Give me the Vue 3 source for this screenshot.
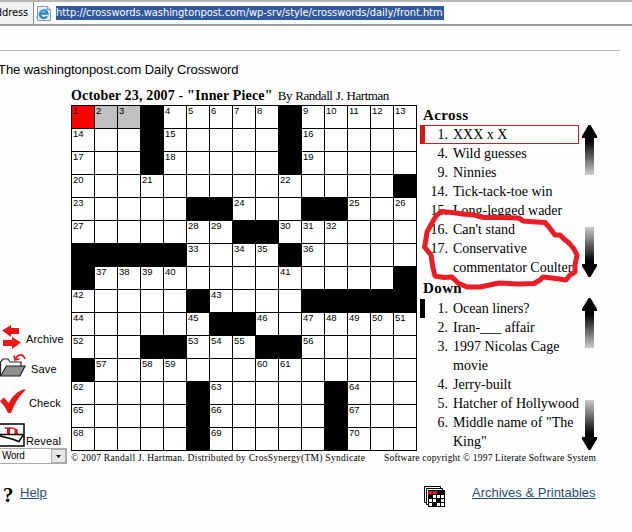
<script setup>
const rows = [
  '...#.....#.....',
  '...#.....#.....',
  '...#.....#.....',
  '..............#',
  '.....##...##...',
  '.......##......',
  '#####....#.....',
  '#.............#',
  '.....#....#####',
  '......##.......',
  '...##...##.....',
  '#..............',
  '.....#.....#...',
  '.....#.....#...',
  '.....#.....#...'
]
const blocked = (r, c) => !rows[r] || rows[r][c] !== '.'
let count = 0
const cells = rows.flatMap((row, r) =>
  [...row].map((ch, c) => {
    const starts = ch === '.' && (blocked(r, c - 1) || blocked(r - 1, c))
    return {
      id: `${r}-${c}`,
      block: ch === '#',
      current: r === 0 && c === 0,
      word: r === 0 && (c === 1 || c === 2),
      number: starts ? ++count : ''
    }
  })
)
const panels = [
  {
    name: 'Across',
    clues: [
      [1, 'XXX x X'], [4, 'Wild guesses'], [9, 'Ninnies'], [14, 'Tick-tack-toe win'],
      [15, 'Long-legged wader'], [16, "Can't stand"], [17, 'Conservative commentator Coulter']
    ]
  },
  {
    name: 'Down',
    clues: [
      [1, 'Ocean liners?'], [2, 'Iran-___ affair'], [3, '1997 Nicolas Cage movie'],
      [4, 'Jerry-built'], [5, 'Hatcher of Hollywood'], [6, 'Middle name of "The King"']
    ]
  }
]
</script>

<template>
  <div class="page">
    <header class="address">
      <span class="label">Address</span>
      <div class="field">
        <svg class="ie" width="16" height="17" viewBox="0 0 16 17">
          <path d="M1.5 1.5h10l3 3v11h-13z" fill="#e4edf7" stroke="#8c9bb0" />
          <path d="M11.5 1.5v3h3" fill="#cfdcec" stroke="#8c9bb0" />
          <path d="M11 11.2a3.8 3.8 0 1 1 .5-2.6H4.5" fill="none" stroke="#2583c4" stroke-width="2.2" />
          <path d="M1 13C-.5 10 7 4 12.500 4.500" fill="none" stroke="#55a9dc" />
        </svg>
        <span class="url">http://crosswords.washingtonpost.com/wp-srv/style/crosswords/daily/front.htm</span>
      </div>
    </header>
    <div class="rule"></div>
    <h1 class="title">The washingtonpost.com Daily Crossword</h1>
    <main class="main">
      <nav class="tools">
        <div class="tool archive">
          <svg width="25" height="24" viewBox="0 0 25 24" fill="#ed1515">
            <path d="M2 5.500 11 0v3h8v6h-8v3zM21 17.500 12 12v3H3v6h9v3z" />
          </svg>
          <span>Archive</span>
        </div>
        <div class="tool save">
          <svg width="26" height="24" viewBox="0 0 26 24">
            <path d="M.5 23V9l2.500-3h5l2 3h11v5" fill="#fff" stroke="#222" stroke-width="1.200" />
            <path d="M.5 23 6.500 13H25l-5 10z" fill="#8e8e8e" stroke="#222" stroke-width="1.200" />
            <path d="M25 6C23 0 18 1 15.500 6M14 2.500l1 4.500 4.500-1" fill="none" stroke="#e02020" stroke-width="1.700" />
          </svg>
          <span>Save</span>
        </div>
        <div class="tool check">
          <svg width="26" height="25" viewBox="0 0 26 25">
            <path d="M0 12 4 8.500 8.500 14Q14 4 23 0.500h3Q16 10 11 24H8Q5 17 0 12z" fill="#ed1515" />
          </svg>
          <span>Check</span>
        </div>
        <div class="tool reveal">
          <svg width="25" height="24" viewBox="0 0 25 24">
            <path d="M-1 1H24V23H-1z" fill="#fff" stroke="#000" stroke-width="1.500" />
            <path d="M5 5h6q6 0 6 6" fill="none" stroke="#d81818" stroke-width="1.500" />
            <path d="M8.500 5v6M16 6v5" fill="none" stroke="#d81818" stroke-width="3" />
            <path d="M0 11.500H24M0 13l12 3 7 2.500 4-6" fill="none" stroke="#000" stroke-width="1.600" />
          </svg>
          <span>Reveal</span>
        </div>
        <div class="select">
          <span>Word</span>
          <i><svg width="5" height="3" viewBox="0 0 5 3"><path d="M0 0h5L2.500 3z" /></svg></i>
        </div>
      </nav>
      <section class="puzzle">
        <h2 class="heading"><b>October 23, 2007 - "Inner Piece"</b> <span>By Randall J. Hartman</span></h2>
        <div class="board">
          <div
            v-for="cell in cells"
            :key="cell.id"
            class="cell"
            :class="{ block: cell.block, current: cell.current, word: cell.word }"
          >{{ cell.number }}</div>
        </div>
      </section>
      <section class="clues">
        <div v-for="(panel, p) in panels" :key="panel.name" class="panel" :class="panel.name.toLowerCase()">
          <h3>{{ panel.name }}</h3>
          <div class="body">
            <ol>
              <li v-for="(clue, i) in panel.clues" :key="clue[0]" :class="{ first: i === 0 }">
                <span class="num">{{ clue[0] }}.</span>
                <span class="text">{{ clue[1] }}</span>
              </li>
            </ol>
            <div class="arrows">
              <svg width="15" height="50" viewBox="0 0 15 50">
                <defs>
                  <linearGradient :id="'up' + p" x1="0" y1="0" x2="0" y2="1">
                    <stop offset=".1" stop-color="#000" />
                    <stop offset="1" stop-color="#ccc" />
                  </linearGradient>
                </defs>
                <path d="M3 12h9v38H3z" :fill="`url(#up${p})`" />
                <path d="M6.500 0h2L15 11v2H0v-2z" />
              </svg>
              <svg width="15" height="50" viewBox="0 0 15 50">
                <defs>
                  <linearGradient :id="'dn' + p" x1="0" y1="0" x2="0" y2="1">
                    <stop offset="0" stop-color="#ccc" />
                    <stop offset=".9" stop-color="#000" />
                  </linearGradient>
                </defs>
                <path d="M3 0h9v38H3z" :fill="`url(#dn${p})`" />
                <path d="M6.500 50h2L15 39v-2H0v2z" />
              </svg>
            </div>
          </div>
        </div>
      </section>
    </main>
    <div class="credits">
      <span class="c1">© 2007 Randall J. Hartman. Distributed by CrosSynergy(TM) Syndicate</span>
      <span class="c2">Software copyright © 1997 Literate Software System</span>
    </div>
    <footer class="footer">
      <b class="q">?</b>
      <a class="help">Help</a>
      <svg class="mini" width="21" height="21" viewBox="0 0 21 21">
        <path d="M.5.5h16v16H.5z" fill="#fff" stroke="#000" />
        <path d="M2.500 2.500h16v16h-16z" fill="#fff" stroke="#000" />
        <path d="M4 4h17v17H4z" />
        <path d="M9 9h3v3H9zM13 9h3v3h-3zM5 13h3v3H5zM9 13h3v3H9zM17 13h3v3h-3zM5 17h3v3H5zM13 17h3v3h-3zM17 17h3v3h-3zM17 9h3v3h-3z" fill="#fff" />
        <path d="M4 5h4v3.500H4zM9 5h4v3.500H9z" fill="#e01818" />
      </svg>
      <a class="arch">Archives &amp; Printables</a>
    </footer>
    <svg class="scribble" width="170" height="90" viewBox="415 205 170 90">
      <path d="M463 214 452 212.500 441 211.500 436 216 432 223 427 232 426 239 424.500 247 431 255 432 262 433 268 435 276 444 277.500 452 277 458 283 467 287 480 287 499 283 517 284 534 283.500 540 280 543 277 552 278 566 280 570 275 575 272 575 265 577 255 574 249 569 243 564 239 560 235 555 235 549 227 545 222.500 536 222 523 221 519 218 500 217.500 484 217.500 474 215z" />
    </svg>
  </div>
</template>

<style>
html, body { margin: 0; background: #fff; overflow: hidden; }
</style>

<style scoped>
.page { position: relative; width: 632px; height: 532px; overflow: hidden; background: #fefefe; color: #000; font-family: "Liberation Sans", Arial, sans-serif; display: flex; flex-direction: column; }
h1, h2, h3, ol { margin: 0; padding: 0; font-weight: normal; }
span, a, b { white-space: nowrap; }
.address { height: 22px; border-top: 2px solid #b5b5b5; border-bottom: 2px solid #9b9b9b; background: #f1f1ef; display: flex; flex: none; }
.label { width: 33px; display: flex; justify-content: flex-end; padding-right: 5px; box-sizing: border-box; font: 11px/22px "DejaVu Sans Condensed", "DejaVu Sans", sans-serif; letter-spacing: -.1px; }
.field { flex: 1; display: flex; align-items: center; background: #fff; border-left: 1px solid #888; padding-left: 2px; }
.url { margin-left: 4px; height: 14px; line-height: 14px; background: #30589f; color: #fff; font-family: "DejaVu Sans Condensed", "DejaVu Sans", sans-serif; font-size: 11px; letter-spacing: -.045px; width: 388px; }
.rule { height: 1px; width: 620px; margin-top: 24px; background: #b9b9b9; flex: none; }
.title { height: 36px; line-height: 38px; font-size: 13px; letter-spacing: -.06px; margin-left: -2px; flex: none; white-space: nowrap; }
.main { height: 364px; display: grid; grid-template-columns: 71px 346px 215px; flex: none; }
.tools { display: flex; flex-direction: column; padding-top: 237px; font-size: 11px; letter-spacing: .15px; }
.tool { display: flex; align-items: center; height: 30px; gap: 2px; }
.tool svg { flex: none; }
.archive { height: 25px; gap: 1px; }
.archive span { padding-top: 5px; }
.save { height: 32px; gap: 5px; }
.save span { padding-top: 7px; }
.check { height: 41px; gap: 3px; }
.check span { padding-top: 2px; }
.reveal { height: 26px; gap: 1px; }
.reveal span { padding-top: 12px; }
.select { display: flex; width: 67px; height: 16px; box-sizing: border-box; border: 1px solid #aaa; border-left: 0; background: #fff; justify-content: space-between; font-size: 10px; line-height: 14px; padding-left: 2px; letter-spacing: -.3px; }
.select i { width: 15px; background: #e7e7e7; display: flex; align-items: center; justify-content: center; border: 1px solid #aaa; box-sizing: border-box; }
.heading { height: 18px; line-height: 18px; font-family: "Liberation Serif", serif; font-size: 13px; letter-spacing: -.45px; word-spacing: .5px; display: flex; gap: 5px; white-space: nowrap; }
.heading b { font-size: 14px; letter-spacing: .17px; word-spacing: 0; }
.board { width: 346px; height: 346px; box-sizing: border-box; background: #000; padding: 1px; display: grid; grid-template-columns: repeat(15, 22px); grid-auto-rows: 22px; gap: 1px; }
.cell { background: #fff; font-size: 9.500px; line-height: 10px; padding-left: 1px; box-sizing: border-box; }
.block { background: #000; }
.current { background: #f00; }
.word { background: #c0c0c0; }
.clues { padding: 18px 0 0 3px; font-family: "Liberation Serif", serif; font-size: 14px; }
.panel h3 { height: 20px; line-height: 20px; font-weight: bold; font-size: 15px; letter-spacing: .4px; padding-left: 3px; }
.panel { height: 173px; }
.body { display: flex; gap: 3px; height: 152px; }
.panel ol { list-style: none; width: 159px; }
.panel li { display: flex; line-height: 19px; box-sizing: border-box; }
.num { width: 28px; text-align: right; flex: none; }
.panel .text { margin-left: 5px; white-space: normal; width: 126px; }
.first { height: 19px; }
.across .first { border: 1px solid #c81e1e; border-left: 5px solid #e01414; line-height: 18px; }
.across .first .num { width: 23px; }
.down .first { border-left: 5px solid #000; }
.down .first .num { width: 23px; }
.down ol { padding-top: 1px; }
.arrows { display: flex; flex-direction: column; justify-content: space-between; }
.credits { height: 14px; display: flex; justify-content: space-between; width: 525px; margin-left: 71px; font: 9.500px/14px "Liberation Serif", serif; flex: none; }
.c1 { letter-spacing: .27px; }
.c2 { letter-spacing: .18px; }
.footer { display: flex; align-items: flex-start; padding: 18px 0 0 3px; }
.q { width: 17px; font: bold 21px/24px "Liberation Serif", serif; }
.footer a { color: #1f4f7c; text-decoration: underline; font-size: 13px; line-height: 20px; }
.help { width: 26px; }
.mini { margin: 3px 0 0 378px; }
.arch { margin-left: 27px; }
.scribble { position: absolute; left: 415px; top: 205px; fill: none; stroke: #ea1c24; stroke-width: 5; stroke-linejoin: round; }
</style>
